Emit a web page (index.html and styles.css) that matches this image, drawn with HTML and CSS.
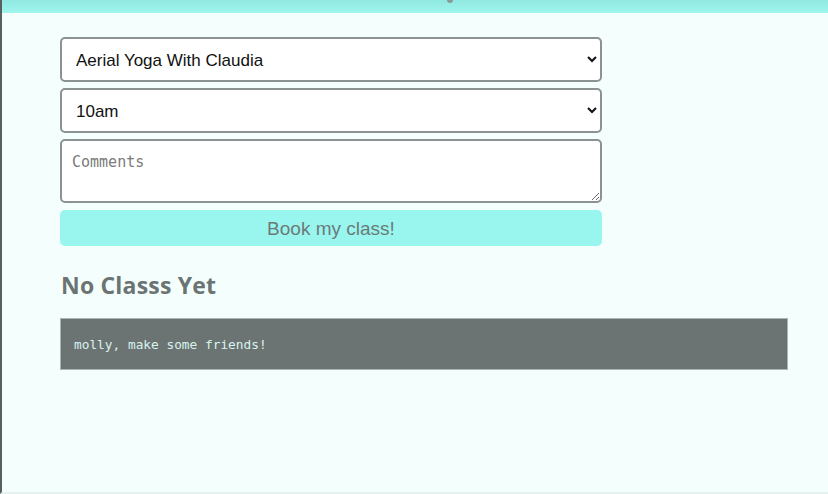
FILE: index.html
```html
<!DOCTYPE html>
<html>
<head>
<meta charset="utf-8">
<link rel="stylesheet" href="styles.css">
</head>
<body>
<div class="page">
  <header class="topbar"><span class="dot"></span></header>
  <main class="content">
    <form class="booking">
      <select class="field select">
        <option>Aerial Yoga With Claudia</option>
      </select>
      <select class="field select">
        <option>10am</option>
      </select>
      <textarea class="field comments" placeholder="Comments"></textarea>
      <button type="button" class="book">Book my class!</button>
    </form>
    <h2 class="title">No Classs Yet</h2>
    <pre class="note">molly, make some friends!</pre>
  </main>
</div>
</body>
</html>
```
FILE: styles.css
```css
html, body {
  margin: 0;
  padding: 0;
  height: 100%;
}
body {
  background: #f4fffd;
  font-family: "Liberation Sans", Arial, sans-serif;
  overflow: hidden;
}
.page {
  height: 494px;
  border-left: 2px solid #5a5f5f;
  box-sizing: border-box;
  border-bottom: 2px solid #e6f2f0;
}
.topbar {
  height: 13px;
  background: linear-gradient(#8fe8e1, #a0f6ef);
  display: flex;
  justify-content: center;
}
.dot {
  width: 6px;
  height: 3px;
  background: #8a9a98;
  border-radius: 0 0 3px 3px;
  margin-left: 70px;
}
.content {
  padding: 24px 0 0 58px;
}
.booking {
  width: 542px;
  display: flex;
  flex-direction: column;
  gap: 6px;
}
.field {
  box-sizing: border-box;
  border: 2px solid #8c9291;
  border-radius: 5px;
  background: #fff;
  margin: 0;
}
.select {
  height: 45px;
  font-family: "Liberation Sans", Arial, sans-serif;
  font-size: 17px;
  color: #111;
  padding: 1px 8px 0 10px;
}
.comments {
  height: 64px;
  font-family: "DejaVu Sans Mono", monospace;
  font-size: 15px;
  padding: 12px 10px 10px;
  resize: vertical;
}
.comments::placeholder {
  color: #7a7a7a;
}
.book {
  margin-top: 1px;
  height: 36px;
  border: none;
  border-radius: 5px;
  background: #98f6ef;
  color: #6c7b79;
  font-family: "Liberation Sans", Arial, sans-serif;
  font-size: 19px;
  padding-top: 2px;
}
.title {
  margin: 24px 0 0 1px;
  font-family: "Open Sans", sans-serif;
  font-weight: 700;
  font-size: 23px;
  letter-spacing: 0.2px;
  line-height: 30px;
  color: #6b7473;
}
.note {
  margin: 18px 0 0 0;
  width: 728px;
  box-sizing: border-box;
  height: 52px;
  background: #6c7473;
  border: 1px solid #a9b5b3;
  padding: 1px 13px 0;
  display: flex;
  align-items: center;
  font-family: "DejaVu Sans Mono", monospace;
  font-size: 12.8px;
  color: #d8f2ef;
}
```
